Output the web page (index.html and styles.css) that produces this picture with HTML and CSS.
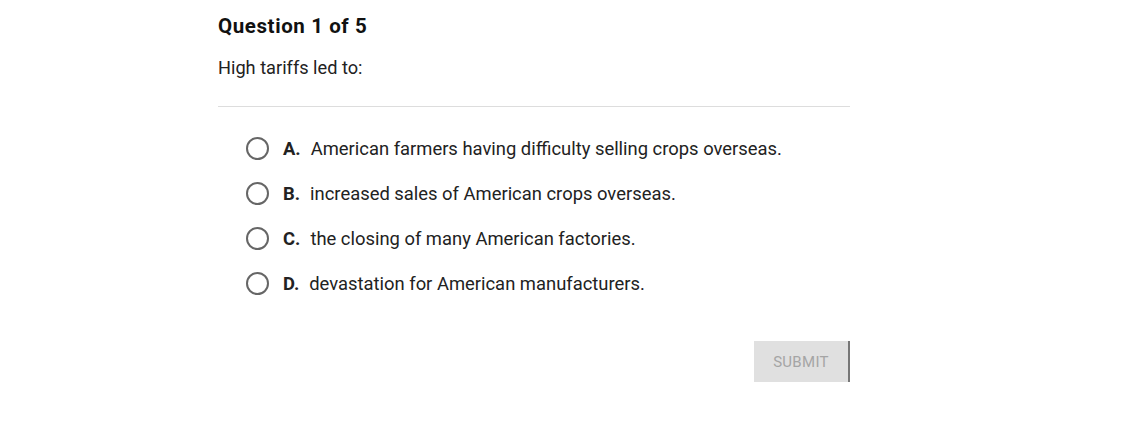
FILE: index.html
```html
<!DOCTYPE html>
<html>
<head>
<meta charset="utf-8">
<link rel="stylesheet" href="styles.css">
</head>
<body>
<div class="quiz">
  <h1 class="title">Question 1 of 5</h1>
  <p class="prompt">High tariffs led to:</p>
  <hr class="divider">
  <ul class="options">
    <li class="option"><span class="radio"></span><span class="letter">A.</span><span class="text">American farmers having difficulty selling crops overseas.</span></li>
    <li class="option"><span class="radio"></span><span class="letter">B.</span><span class="text">increased sales of American crops overseas.</span></li>
    <li class="option"><span class="radio"></span><span class="letter">C.</span><span class="text">the closing of many American factories.</span></li>
    <li class="option"><span class="radio"></span><span class="letter">D.</span><span class="text">devastation for American manufacturers.</span></li>
  </ul>
  <div class="actions"><button class="submit">SUBMIT</button></div>
</div>
</body>
</html>
```

FILE: styles.css
```css
* { box-sizing: border-box; }
html, body { margin: 0; padding: 0; background: #fff; }
body { font-family: Roboto, "Noto Sans", sans-serif; color: #222; }
.quiz { width: 632px; margin-left: 218px; padding-top: 14px; }
.title { font-size: 20.5px; font-weight: 700; margin: 0; line-height: 25px; letter-spacing: 0.6px; color: #111; }
.prompt { font-size: 18.2px; margin: 17px 0 0; line-height: 24px; }
.divider { border: 0; border-top: 1px solid #ddd; margin: 26px 0 0; }
.options { list-style: none; margin: 0; padding: 29px 0 0 28px; display: flex; flex-direction: column; gap: 21px; }
.option { display: flex; align-items: center; height: 24px; font-size: 18.4px; }
.radio { width: 23px; height: 23px; border: 2px solid #666; border-radius: 50%; margin-right: 14px; flex: none; }
.letter { font-weight: 700; margin-right: 10px; }
.actions { display: flex; justify-content: flex-end; margin-top: 46px; }
.submit { width: 96px; height: 41px; background: #e0e0e0; border: 0; border-right: 2px solid #777; font-family: Roboto, sans-serif; font-size: 15px; color: #a5a5a5; letter-spacing: 0.3px; padding: 0; }
```
